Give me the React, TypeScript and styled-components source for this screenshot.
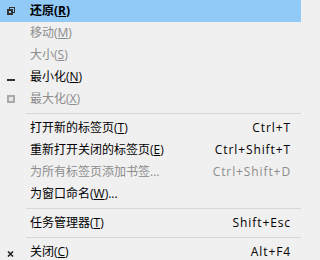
import React from "react";
import styled, { createGlobalStyle } from "styled-components";

const Global = createGlobalStyle`
  html, body { margin: 0; padding: 0; background: #f0f0f0; }
  body { overflow: hidden; }
`;

const Menu = styled.div`
  width: 301px;
  height: 260px;
  background: #f0f0f0;
  font-family: "Open Sans", "Noto Sans CJK SC", sans-serif;
  font-size: 12px;
  color: #000;
  display: flex;
  flex-direction: column;
  overflow: hidden;
`;

const Row = styled.div<{ $active?: boolean; $disabled?: boolean }>`
  flex: none;
  height: 22px;
  display: flex;
  align-items: center;
  background: ${(p) => (p.$active ? "#91c9f7" : "transparent")};
  color: ${(p) => (p.$disabled ? "#8c8c8c" : "#000")};
  padding-right: 10px;
`;

const IconCell = styled.div`
  width: 30px;
  height: 22px;
  flex: none;
  display: flex;
  align-items: center;
  padding-left: 7px;
  box-sizing: border-box;
`;

const Label = styled.span<{ $bold?: boolean }>`
  flex: 1;
  white-space: nowrap;
  font-weight: ${(p) => (p.$bold ? 700 : 400)};
  line-height: 22px;
  u { text-underline-offset: 1px; }
`;

const Shortcut = styled.span`
  white-space: nowrap;
  line-height: 22px;
  letter-spacing: 0.9px;
`;

const Separator = styled.div`
  flex: none;
  height: 7px;
  display: flex;
  align-items: center;
  padding-left: 26px;
  &::after {
    content: "";
    flex: 1;
    height: 1px;
    background: #d7d7d7;
  }
`;

const RestoreIcon = () => (
  <svg width="8" height="8" viewBox="0 0 8 8" shapeRendering="crispEdges">
    <path d="M2 0h6v6h-2v-1h1v-4h-4v1h-1z" fill="#333" />
    <path d="M0 2h6v6h-6z M2 4v2h2v-2z" fill="#333" fillRule="evenodd" />
  </svg>
);

const MinIcon = () => (
  <svg width="8" height="8" viewBox="0 0 8 8" shapeRendering="crispEdges" style={{ marginTop: 4 }}>
    <rect x="0" y="4" width="8" height="2" fill="#333" />
  </svg>
);

const MaxIcon = () => (
  <svg width="8" height="8" viewBox="0 0 8 8" shapeRendering="crispEdges">
    <path d="M0 0h8v8h-8z M2 2v4h4v-4z" fill="#a8a8a8" fillRule="evenodd" />
    <rect x="2" y="2" width="4" height="4" fill="#e6e6e6" />
  </svg>
);

const CloseIcon = () => (
  <svg width="7" height="6" viewBox="0 0 7 6" style={{ marginTop: 3 }}>
    <path d="M1 0.5 L6 5.5 M6 0.5 L1 5.5" stroke="#222" strokeWidth="1.6" />
  </svg>
);

export default function App() {
  return (
    <>
      <Global />
      <Menu>
        <Row $active>
          <IconCell>
            <RestoreIcon />
          </IconCell>
          <Label $bold>
            还原(<u>R</u>)
          </Label>
        </Row>
        <Row $disabled>
          <IconCell />
          <Label>
            移动(<u>M</u>)
          </Label>
        </Row>
        <Row $disabled>
          <IconCell />
          <Label>
            大小(<u>S</u>)
          </Label>
        </Row>
        <Row>
          <IconCell>
            <MinIcon />
          </IconCell>
          <Label>
            最小化(<u>N</u>)
          </Label>
        </Row>
        <Row $disabled>
          <IconCell>
            <MaxIcon />
          </IconCell>
          <Label>
            最大化(<u>X</u>)
          </Label>
        </Row>
        <Separator />
        <Row>
          <IconCell />
          <Label>
            打开新的标签页(<u>T</u>)
          </Label>
          <Shortcut>Ctrl+T</Shortcut>
        </Row>
        <Row>
          <IconCell />
          <Label>
            重新打开关闭的标签页(<u>E</u>)
          </Label>
          <Shortcut>Ctrl+Shift+T</Shortcut>
        </Row>
        <Row $disabled>
          <IconCell />
          <Label>为所有标签页添加书签...</Label>
          <Shortcut>Ctrl+Shift+D</Shortcut>
        </Row>
        <Row>
          <IconCell />
          <Label>
            为窗口命名(<u>W</u>)...
          </Label>
        </Row>
        <Separator />
        <Row>
          <IconCell />
          <Label>
            任务管理器(<u>T</u>)
          </Label>
          <Shortcut>Shift+Esc</Shortcut>
        </Row>
        <Separator />
        <Row>
          <IconCell>
            <CloseIcon />
          </IconCell>
          <Label>
            关闭(<u>C</u>)
          </Label>
          <Shortcut>Alt+F4</Shortcut>
        </Row>
      </Menu>
    </>
  );
}
